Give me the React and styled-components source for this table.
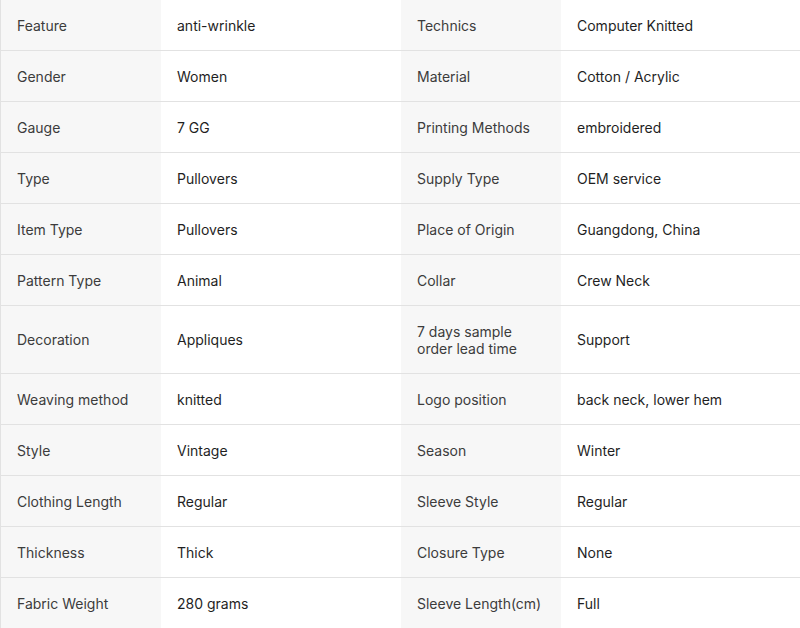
import React from 'react';
import styled, { createGlobalStyle } from 'styled-components';

const GlobalStyle = createGlobalStyle`
  body {
    margin: 0;
    background: #fff;
    font-family: Inter, "Liberation Sans", sans-serif;
  }
`;

const SpecGrid = styled.div`
  width: 799px;
  display: grid;
  grid-template-columns: 160px 240px 160px 239px;
  border-left: 1px solid #e2e2e2;
  font-size: 14px;
  line-height: 17px;
`;

const Cell = styled.div`
  display: flex;
  align-items: center;
  padding: 16.5px 16px;
  border-bottom: 1px solid #e2e2e2;
  background: ${(p) => (p.$label ? '#f7f7f7' : '#fff')};
  color: ${(p) => (p.$label ? '#3c3c3c' : '#1f1f1f')};
`;

const specs = [
  ['Feature', 'anti-wrinkle', 'Technics', 'Computer Knitted'],
  ['Gender', 'Women', 'Material', 'Cotton / Acrylic'],
  ['Gauge', '7 GG', 'Printing Methods', 'embroidered'],
  ['Type', 'Pullovers', 'Supply Type', 'OEM service'],
  ['Item Type', 'Pullovers', 'Place of Origin', 'Guangdong, China'],
  ['Pattern Type', 'Animal', 'Collar', 'Crew Neck'],
  ['Decoration', 'Appliques', '7 days sample order lead time', 'Support'],
  ['Weaving method', 'knitted', 'Logo position', 'back neck, lower hem'],
  ['Style', 'Vintage', 'Season', 'Winter'],
  ['Clothing Length', 'Regular', 'Sleeve Style', 'Regular'],
  ['Thickness', 'Thick', 'Closure Type', 'None'],
  ['Fabric Weight', '280 grams', 'Sleeve Length(cm)', 'Full'],
];

export default function App() {
  return (
    <>
      <GlobalStyle />
      <SpecGrid>
        {specs.map(([l1, v1, l2, v2]) => (
          <React.Fragment key={l1}>
            <Cell $label>{l1}</Cell>
            <Cell>{v1}</Cell>
            <Cell $label>{l2}</Cell>
            <Cell>{v2}</Cell>
          </React.Fragment>
        ))}
      </SpecGrid>
    </>
  );
}
